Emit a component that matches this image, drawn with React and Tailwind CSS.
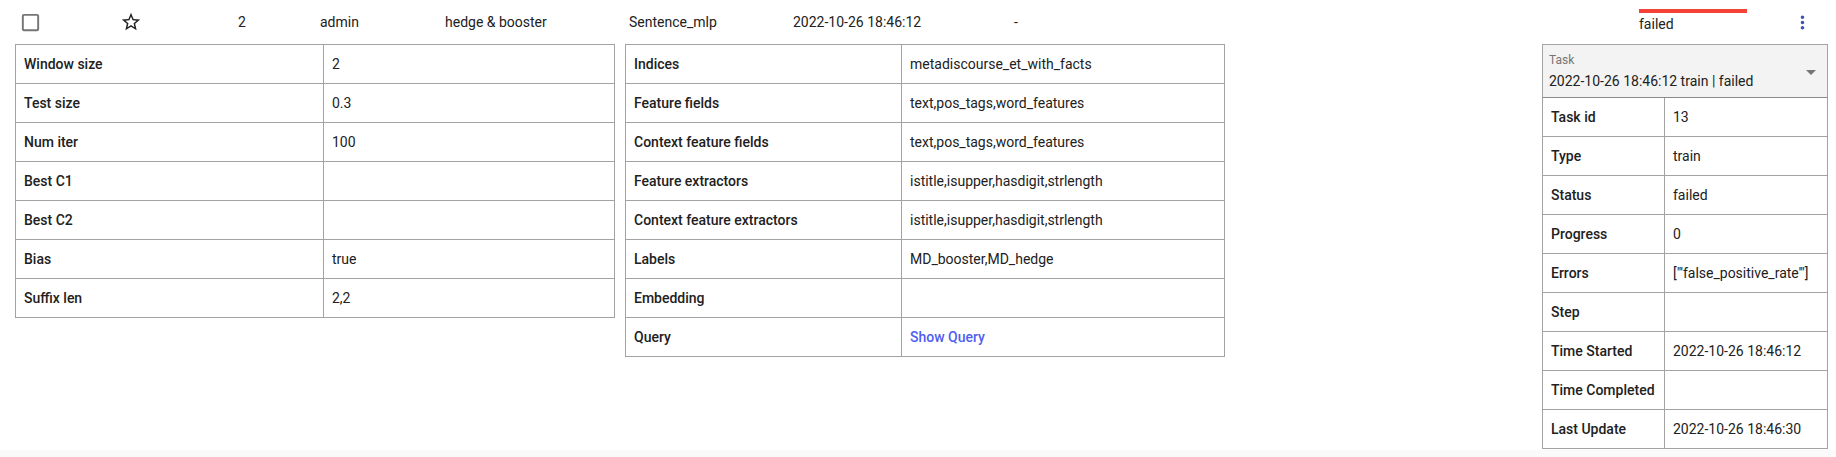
import React from "react"

const font = {fontFamily: "Roboto, 'Noto Sans', sans-serif"}

const paramsLeft = [
  ["Window size", "2"],
  ["Test size", "0.3"],
  ["Num iter", "100"],
  ["Best C1", ""],
  ["Best C2", ""],
  ["Bias", "true"],
  ["Suffix len", "2,2"],
]

const paramsRight = [
  ["Indices", "metadiscourse_et_with_facts"],
  ["Feature fields", "text,pos_tags,word_features"],
  ["Context feature fields", "text,pos_tags,word_features"],
  ["Feature extractors", "istitle,isupper,hasdigit,strlength"],
  ["Context feature extractors", "istitle,isupper,hasdigit,strlength"],
  ["Labels", "MD_booster,MD_hedge"],
  ["Embedding", ""],
  ["Query", "link"],
]

const taskInfo = [
  ["Task id", "13"],
  ["Type", "train"],
  ["Status", "failed"],
  ["Progress", "0"],
  ["Errors", "[\"'false_positive_rate'\"]"],
  ["Step", ""],
  ["Time Started", "2022-10-26 18:46:12"],
  ["Time Completed", ""],
  ["Last Update", "2022-10-26 18:46:30"],
]

function CheckboxBlank() {
  return (
    <svg width="23" height="23" viewBox="0 0 24 24" fill="#757575">
      <path d="M19 5v14H5V5h14m0-2H5c-1.11 0-2 .9-2 2v14c0 1.1.89 2 2 2h14c1.1 0 2-.9 2-2V5c0-1.1-.9-2-2-2z"/>
    </svg>
  )
}

function StarBorder() {
  return (
    <svg width="22" height="22" viewBox="0 0 24 24" fill="#212121">
      <path d="M22 9.24l-7.19-.62L12 2 9.19 8.63 2 9.24l5.46 4.73L5.82 21 12 17.27 18.18 21l-1.63-7.03L22 9.24zM12 15.4l-3.76 2.27 1-4.28-3.32-2.88 4.38-.38L12 6.1l1.71 4.04 4.38.38-3.32 2.88 1 4.28L12 15.4z"/>
    </svg>
  )
}

function MoreVert() {
  return (
    <svg width="21" height="21" viewBox="0 0 24 24" fill="#3f51b5">
      <path d="M12 8c1.1 0 2-.9 2-2s-.9-2-2-2-2 .9-2 2 .9 2 2 2zm0 2c-1.1 0-2 .9-2 2s.9 2 2 2 2-.9 2-2-.9-2-2-2zm0 6c-1.1 0-2 .9-2 2s.9 2 2 2 2-.9 2-2-.9-2-2-2z"/>
    </svg>
  )
}

function InfoTable({rows, labelWidth, className}) {
  return (
    <div className={`border border-[#a3a3a3] ${className}`}>
      {rows.map(([label, value], i) => (
        <div key={label} className={`flex h-[38px] ${i < rows.length - 1 ? "border-b border-[#a3a3a3] h-[39px]" : ""}`}>
          <div className={`${labelWidth} shrink-0 flex items-center pl-2 font-medium text-[14px] text-[#212121]`}>
            {label}
          </div>
          <div className="flex-1 flex items-center pl-2 border-l border-[#a3a3a3] text-[14px] text-[#212121] whitespace-nowrap">
            {value === "link" ? (
              <span className="text-[#4f5ef0] font-medium cursor-pointer">Show Query</span>
            ) : value}
          </div>
        </div>
      ))}
    </div>
  )
}

export default function App() {
  return (
    <div className="w-[1836px] h-[457px] bg-white overflow-hidden" style={font}>
      <div className="flex items-center h-[44px] text-[14px] text-[#212121]">
        <div className="w-[122px] pl-[19px] flex items-center">
          <CheckboxBlank/>
        </div>
        <div className="w-[116px] flex items-center -ml-[2px]">
          <StarBorder/>
        </div>
        <div className="w-[82px] ml-[2px]">2</div>
        <div className="w-[125px]">admin</div>
        <div className="w-[184px]">hedge &amp; booster</div>
        <div className="w-[164px]">Sentence_mlp</div>
        <div className="w-[221px]">2022-10-26 18:46:12</div>
        <div className="w-[625px]">-</div>
        <div className="w-[153px] flex flex-col self-stretch pt-[9px]">
          <div className="w-[108px] h-[4px] bg-[#f44336]"/>
          <div className="mt-[3px] leading-[17px]">failed</div>
        </div>
        <div className="flex items-center">
          <MoreVert/>
        </div>
      </div>

      <div className="flex pl-[15px] pr-[8px] h-[406px]">
        <InfoTable rows={paramsLeft} labelWidth="w-[307px]" className="w-[600px] self-start"/>
        <InfoTable rows={paramsRight} labelWidth="w-[275px]" className="w-[600px] ml-[10px] self-start"/>
        <div className="ml-auto w-[286px] self-start">
          <div className="relative h-[54px] bg-[#f3f3f3] border border-[#a3a3a3] border-b-[#8a8a8a] pl-[6px] pt-[8px]">
            <div className="text-[12px] leading-[14px] text-[#757575]">Task</div>
            <div className="text-[14px] leading-[20px] mt-[4px] text-[#212121] whitespace-nowrap">
              2022-10-26 18:46:12 train | failed
            </div>
            <svg className="absolute right-[4px] top-[15px]" width="24" height="24" viewBox="0 0 24 24" fill="#757575">
              <path d="M7 10l5 5 5-5z"/>
            </svg>
          </div>
          <InfoTable rows={taskInfo} labelWidth="w-[121px]" className="border-t-0"/>
        </div>
      </div>
      <div className="h-[7px] bg-[#fafafa]"/>
    </div>
  )
}
